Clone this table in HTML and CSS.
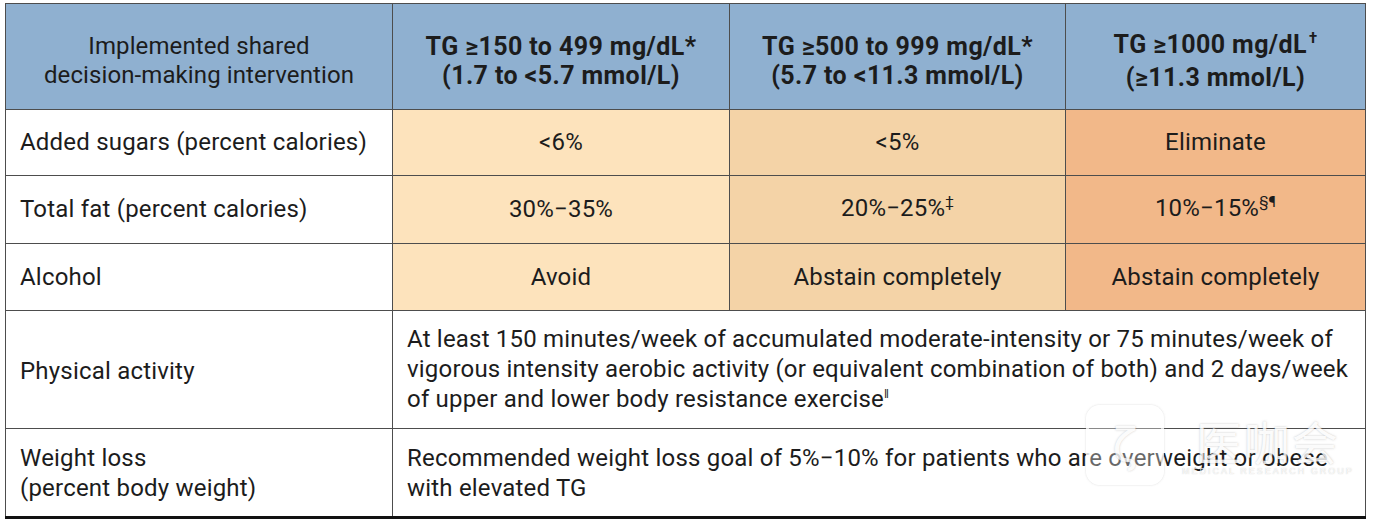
FILE: index.html
```html
<!DOCTYPE html>
<html>
<head>
<meta charset="utf-8">
<link rel="stylesheet" href="styles.css">
</head>
<body>
<div class="page">
  <table class="tg">
    <colgroup>
      <col class="c1"><col class="c2"><col class="c3"><col class="c4">
    </colgroup>
    <thead>
      <tr class="head">
        <th class="h-first">Implemented shared<br>decision-making intervention</th>
        <th>TG ≥150 to 499 mg/dL*<br>(1.7 to &lt;5.7 mmol/L)</th>
        <th>TG ≥500 to 999 mg/dL*<br>(5.7 to &lt;11.3 mmol/L)</th>
        <th>TG ≥1000 mg/dL<sup class="dag">†</sup><br>(≥11.3 mmol/L)</th>
      </tr>
    </thead>
    <tbody>
      <tr class="r1">
        <td class="lbl">Added sugars (percent calories)</td>
        <td class="v1">&lt;6%</td>
        <td class="v2">&lt;5%</td>
        <td class="v3">Eliminate</td>
      </tr>
      <tr class="r2">
        <td class="lbl">Total fat (percent calories)</td>
        <td class="v1">30%−35%</td>
        <td class="v2">20%−25%<sup class="fn">‡</sup></td>
        <td class="v3">10%−15%<sup class="fn">§¶</sup></td>
      </tr>
      <tr class="r3">
        <td class="lbl">Alcohol</td>
        <td class="v1">Avoid</td>
        <td class="v2">Abstain completely</td>
        <td class="v3">Abstain completely</td>
      </tr>
      <tr class="r4">
        <td class="lbl">Physical activity</td>
        <td class="wide" colspan="3">At least 150 minutes/week of accumulated moderate-intensity or 75 minutes/week of<br>vigorous intensity aerobic activity (or equivalent combination of both) and 2 days/week<br>of upper and lower body resistance exercise<sup class="fn2">‖</sup></td>
      </tr>
      <tr class="r5">
        <td class="lbl">Weight loss<br>(percent body weight)</td>
        <td class="wide" colspan="3">Recommended weight loss goal of 5%−10% for patients who are overweight or obese<br>with elevated TG</td>
      </tr>
    </tbody>
  </table>
  <div class="watermark">
    <div class="wm-box"><span class="wm-mark">ζ</span></div>
    <div class="wm-text">
      <span class="wm-cn">医咖会</span>
      <span class="wm-en">MEDICAL RESEARCH GROUP</span>
    </div>
  </div>
</div>
</body>
</html>
```
FILE: styles.css
```css
html, body {
  margin: 0;
  padding: 0;
  background: #ffffff;
}
.page {
  position: relative;
  padding: 3px 0 0 5px;
  font-family: Roboto, "Liberation Sans", sans-serif;
  color: #1c1c1c;
}
.tg {
  border-collapse: collapse;
  table-layout: fixed;
  width: 1360px;
  font-size: 24px;
  letter-spacing: 0.2px;
}
.c1 { width: 387px; }
.c2 { width: 337px; }
.c3 { width: 336px; }
.c4 { width: 300px; }

.tg th, .tg td {
  border: 1.5px solid #4d4d4d;
  padding: 0 14px;
  line-height: 29px;
}
.tg tbody tr:last-child td {
  border-bottom: 3px solid #111;
}
.head th {
  background: #8fb0d0;
  height: 97px;
  padding-top: 8px;
  text-align: center;
  font-weight: 700;
  font-size: 25px;
  letter-spacing: 0.4px;
}
.head th.h-first {
  font-weight: 400;
  font-size: 24px;
  letter-spacing: 0.1px;
}
.dag {
  font-size: 15px;
  vertical-align: 0;
  position: relative;
  top: -10px;
  margin-left: 2px;
}
.fn {
  font-size: 15px;
  position: relative;
  top: -9px;
  vertical-align: 0;
}
.fn2 {
  font-size: 12px;
  position: relative;
  top: -9px;
  vertical-align: 0;
}
.lbl {
  background: #ffffff;
  text-align: left;
}
.v1, .v2, .v3 { text-align: center; }
.v1 { background: #fde3bc; }
.v2 { background: #f4d3a7; }
.v3 { background: #f2b889; }

.r1 td { height: 65px; }
.r2 td { height: 67px; }
.r3 td { height: 66px; }
.r4 td { height: 114px; line-height: 30px; padding-top: 3px; }
.r5 td { height: 87px; line-height: 30px; }
.wide {
  background: #ffffff;
  text-align: left;
}

.watermark {
  position: absolute;
  left: 1086px;
  top: 405px;
  display: flex;
  align-items: center;
  gap: 18px;
  opacity: 0.85;
  pointer-events: none;
}
.wm-box {
  width: 72px;
  height: 74px;
  border-radius: 14px;
  border: 3px solid rgba(255,255,255,0.9);
  box-shadow: 0 0 2px rgba(120,120,120,0.35);
  background: rgba(255,255,255,0.4);
  display: flex;
  align-items: center;
  justify-content: center;
}
.wm-mark {
  font-family: "DejaVu Sans", sans-serif;
  font-size: 46px;
  color: rgba(255,255,255,0.95);
  text-shadow: 0 0 2px rgba(120,120,120,0.45);
}
.wm-text {
  display: flex;
  flex-direction: column;
  align-items: center;
}
.wm-cn {
  font-family: "Noto Sans CJK SC", sans-serif;
  font-size: 46px;
  line-height: 52px;
  letter-spacing: 2px;
  color: rgba(255,255,255,0.95);
  text-shadow: 0 0 2px rgba(120,120,120,0.5);
}
.wm-en {
  font-family: "Liberation Sans", sans-serif;
  font-size: 9px;
  letter-spacing: 2px;
  color: rgba(255,255,255,0.9);
  text-shadow: 0 0 1px rgba(120,120,120,0.5);
}
```
